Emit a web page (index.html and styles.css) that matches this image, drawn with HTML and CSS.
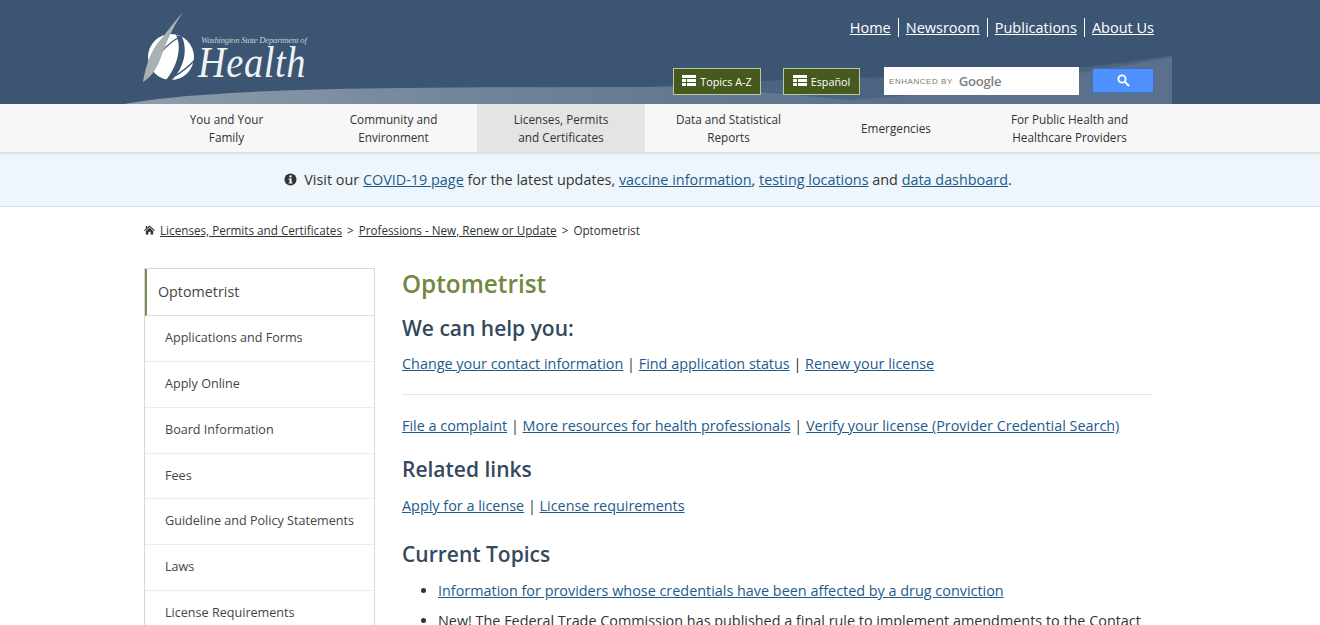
FILE: index.html
```html
<!DOCTYPE html>
<html lang="en">
<head>
<meta charset="utf-8">
<title>Optometrist</title>
<link rel="stylesheet" href="styles.css">
</head>
<body>
<header class="masthead">
  <svg class="swoosh" viewBox="0 0 1048 56" preserveAspectRatio="none" aria-hidden="true">
    <defs>
      <linearGradient id="sw" x1="0" x2="1" y1="0" y2="0">
        <stop offset="0" stop-color="#8f9dab"/>
        <stop offset="0.4" stop-color="#74889c"/>
        <stop offset="0.72" stop-color="#64798f"/>
        <stop offset="1" stop-color="#5b7390"/>
      </linearGradient>
    </defs>
    <path d="M510 40 C640 30 800 30 900 24 C960 20 1010 14 1048 7 L1048 56 L740 56 Z" fill="#4c6480"/>
    <path d="M640 56 C800 50 900 36 1048 9 L1048 56 Z" fill="#5a708b"/>
    <path d="M0 56 C60 45 170 41 280 40 C400 39 500 39 560 39 C640 43 700 50 770 56 Z" fill="url(#sw)"/>
  </svg>
  <div class="masthead-inner">
    <a class="logo" href="#">
      <svg class="logo-mark" viewBox="0 0 56 72" aria-hidden="true">
        <circle cx="29" cy="45" r="23" fill="#fff"/>
        <path d="M34 23 C40 34 36 54 24 68 L30 68 C42 56 46 38 40 25 Z" fill="#3c5573"/>
        <path d="M39 24 C28 30 18 40 11 51" fill="none" stroke="#3c5573" stroke-width="1.4"/>
        <path d="M53 48 C47 54 40 60 33 64" fill="none" stroke="#3c5573" stroke-width="1.4"/>
        <path d="M41 0 C34 8 26 18 20 26 C10 36 4 52 1 70 C8 66 14 58 18 48 C22 36 30 16 41 0 Z" fill="#a9b1b6"/>
      </svg>
      <span class="logo-text">
        <span class="logo-small">Washington State Department of</span>
        <span class="logo-big">Health</span>
      </span>
    </a>
    <div class="masthead-right">
      <nav class="toplinks">
        <a href="#">Home</a><a href="#">Newsroom</a><a href="#">Publications</a><a href="#">About Us</a>
      </nav>
      <div class="tools">
        <a class="tool-btn tool-topics" href="#">
          <svg class="grid-ico" viewBox="0 0 14 12" aria-hidden="true"><path d="M0 0H14V3H0ZM0 4H4V7H0ZM5 4H14V7H5ZM0 8H4V11H0ZM5 8H14V11H5Z" fill="#fff"/></svg>Topics A-Z</a>
        <a class="tool-btn tool-es" href="#">
          <svg class="grid-ico" viewBox="0 0 14 12" aria-hidden="true"><path d="M0 0H14V3H0ZM0 4H4V7H0ZM5 4H14V7H5ZM0 8H4V11H0ZM5 8H14V11H5Z" fill="#fff"/></svg>Español</a>
        <div class="search-box"><span class="enh">ENHANCED BY</span><span class="goog">Google</span></div>
        <button class="search-btn" aria-label="Search">
          <svg viewBox="0 0 13 13" aria-hidden="true"><circle cx="5" cy="5" r="3.6" fill="none" stroke="#fff" stroke-width="1.8"/><path d="M7.8 7.8L12 12" stroke="#fff" stroke-width="2"/></svg>
        </button>
      </div>
    </div>
  </div>
</header>

<nav class="mainnav">
  <div class="mainnav-grid">
    <a href="#">You and Your<br>Family</a>
    <a href="#">Community and<br>Environment</a>
    <a class="active" href="#">Licenses, Permits<br>and Certificates</a>
    <a href="#">Data and Statistical<br>Reports</a>
    <a href="#">Emergencies</a>
    <a href="#">For Public Health and<br>Healthcare Providers</a>
  </div>
</nav>

<div class="alert">
  <svg class="info" viewBox="0 0 14 14" aria-hidden="true"><circle cx="7" cy="7" r="6.5" fill="#333"/><rect x="5.8" y="2.6" width="2.4" height="2.2" fill="#eef6fb"/><path d="M5 6H8.2V10.2H9.2V11.4H5V10.2H6V7.2H5Z" fill="#eef6fb"/></svg>
  <span>Visit our <a href="#">COVID-19 page</a> for the latest updates, <a href="#">vaccine information</a>, <a href="#">testing locations</a> and <a href="#">data dashboard</a>.</span>
</div>

<div class="crumbs">
  <svg class="home" viewBox="0 0 12 10" aria-hidden="true"><path d="M6 0L12 5.2L11.2 6L6 1.6L.8 6L0 5.2L2 3.5V.6H3.4V2.3ZM6 2.6L10 6V10H7.2V7H4.8V10H2V6Z" fill="#333"/></svg>
  <a href="#">Licenses, Permits and Certificates</a><span class="sep">&gt;</span><a href="#">Professions - New, Renew or Update</a><span class="sep">&gt;</span><span>Optometrist</span>
</div>

<div class="layout">
  <aside class="sidenav">
    <a class="side-head" href="#">Optometrist</a>
    <a href="#">Applications and Forms</a>
    <a href="#">Apply Online</a>
    <a href="#">Board Information</a>
    <a href="#">Fees</a>
    <a href="#">Guideline and Policy Statements</a>
    <a href="#">Laws</a>
    <a href="#">License Requirements</a>
  </aside>
  <main class="content">
    <h1>Optometrist</h1>
    <h2 class="first">We can help you:</h2>
    <p class="links"><a href="#">Change your contact information</a> | <a href="#">Find application status</a> | <a href="#">Renew your license</a></p>
    <hr>
    <p class="links"><a href="#">File a complaint</a> | <a href="#">More resources for health professionals</a> | <a href="#">Verify your license (Provider Credential Search)</a></p>
    <h2>Related links</h2>
    <p class="links"><a href="#">Apply for a license</a> | <a href="#">License requirements</a></p>
    <h2 class="topics">Current Topics</h2>
    <ul>
      <li><a href="#">Information for providers whose credentials have been affected by a drug conviction</a></li>
      <li>New! The Federal Trade Commission has published a final rule to implement amendments to the Contact</li>
    </ul>
  </main>
</div>
</body>
</html>
```
FILE: styles.css
```css
* { box-sizing: border-box; }
html, body { margin: 0; height: 625px; overflow: hidden; }
body { font-family: "Open Sans", "Noto Sans", sans-serif; color: #333; background: #fff; font-size: 14px; }

.masthead { position: relative; height: 104px; background: #3c5573; overflow: hidden; }
.swoosh { position: absolute; left: 124px; top: 48px; width: 1048px; height: 56px; }
.masthead-inner { position: relative; display: flex; justify-content: space-between; height: 104px; padding: 0 166px 0 142px; }

.logo { display: flex; text-decoration: none; color: #fff; }
.logo-mark { width: 56px; height: 72px; margin-top: 12px; flex: none; }
.logo-text { display: flex; flex-direction: column; margin-left: 2px; padding-top: 34px; }
.logo-small { margin-left: 1px; font: italic 8.6px/12px "Liberation Serif", serif; color: #c6d1da; letter-spacing: -0.2px; white-space: nowrap; }
.logo-big { margin-left: -2px; font: italic 44px/33px "Liberation Serif", serif; color: #eef3f6; letter-spacing: 0.6px; transform: scaleX(0.875); transform-origin: left center; }

.masthead-right { display: flex; flex-direction: column; align-items: flex-end; }
.toplinks { display: flex; margin-top: 18px; font-size: 14.5px; line-height: 19px; }
.toplinks a { color: #fff; padding: 0 7px; border-right: 1px solid #fff; }
.toplinks a:last-child { border-right: 0; padding-right: 0; }
.toplinks a:first-child { padding-left: 0; }

.tools { display: flex; align-items: flex-start; margin-top: 30px; }
.tool-btn { display: flex; align-items: center; justify-content: center; height: 27px; margin-top: 1px; padding-bottom: 1px; background: #47591c; border: 1px solid #bcc9a2; color: #fff; font-size: 10.8px; text-decoration: none; }
.tool-topics { width: 88px; }
.tool-es { width: 77px; margin-left: 22px; }
.grid-ico { width: 14px; height: 12px; margin-right: 4px; }
.search-box { width: 195px; height: 28px; margin-left: 24px; background: #fff; display: flex; align-items: center; padding: 2px 0 0 5px; color: #888; }
.enh { font: 8px/1 "Liberation Sans", sans-serif; letter-spacing: 0.55px; margin-right: 6px; color: #777; }
.goog { font: 600 13.2px/1 "Open Sans", sans-serif; color: #808080; letter-spacing: -0.3px; }
.search-btn { width: 62px; height: 25px; margin: 1px 0 0 13px; padding: 0; background: #4d90fe; border: 1px solid #3c6fbd; border-radius: 2px; display: flex; align-items: center; justify-content: center; }
.search-btn svg { width: 13px; height: 13px; }

.mainnav { background: #f7f7f7; border-bottom: 2px solid #d3e5e6; height: 50px; padding-left: 143px; }
.mainnav-grid { display: grid; grid-template-columns: 167px 167px 168px 167px 168px 179px; height: 48px; }
.mainnav a { display: flex; align-items: center; justify-content: center; text-align: center; color: #333; text-decoration: none; font-size: 11.75px; line-height: 18px; }
.mainnav a.active { background: #e4e4e4; }

.alert { display: flex; align-items: center; justify-content: center; height: 53px; background: #eef6fb; border-bottom: 1px solid #cfe4e6; font-size: 14.4px; color: #333; padding: 0 24px 2px 0; }
.alert a { color: #1d5b8c; }
.info { width: 13px; height: 13px; margin-right: 7px; }

.crumbs { display: flex; align-items: center; height: 17px; margin: 14px 0 0 144px; font-size: 11.7px; color: #333; }
.crumbs a { color: #333; }
.home { width: 11px; height: 10px; margin-right: 5px; }
.sep { margin: 0 5px; }

.layout { display: grid; grid-template-columns: 231px 750px; column-gap: 27px; margin: 30px 0 0 144px; }

.sidenav { display: flex; flex-direction: column; border: 1px solid #d8d8d8; border-width: 1px 1px 0 1px; align-self: start; }
.sidenav a { display: flex; align-items: center; flex: none; height: 45.83px; padding: 0 0 2px 20px; border-top: 1px solid #ececec; color: #444; font-size: 12.6px; text-decoration: none; white-space: nowrap; }
.sidenav a.side-head { height: 47px; padding: 0 0 2px 11px; border-top: 0; border-left: 2px solid #7d8c52; border-bottom: 1px solid #e0e0e0; font-size: 14.3px; }
.sidenav a.side-head + a { border-top: 0; height: 45px; }

.content { min-width: 0; }
h1 { margin: 0; font-size: 24.3px; line-height: 32px; font-weight: 600; color: #72873f; }
h2 { margin: 19px 0 13px; font-size: 21px; line-height: 28px; font-weight: 600; color: #34495e; }
h2.first { margin: 14px 0 0; }
h2.topics { margin-top: 24px; }
.links { margin: 12px 0 0; font-size: 14.4px; line-height: 20px; color: #333; }
.links a, li a { color: #1d5b8c; }
hr { margin: 20px 0 21px; border: 0; border-top: 1px solid #e6e6e6; }
ul { margin: 13px 0 0; padding: 0 0 0 36px; font-size: 14.4px; line-height: 20px; }
li { margin-bottom: 10px; white-space: nowrap; }
```
